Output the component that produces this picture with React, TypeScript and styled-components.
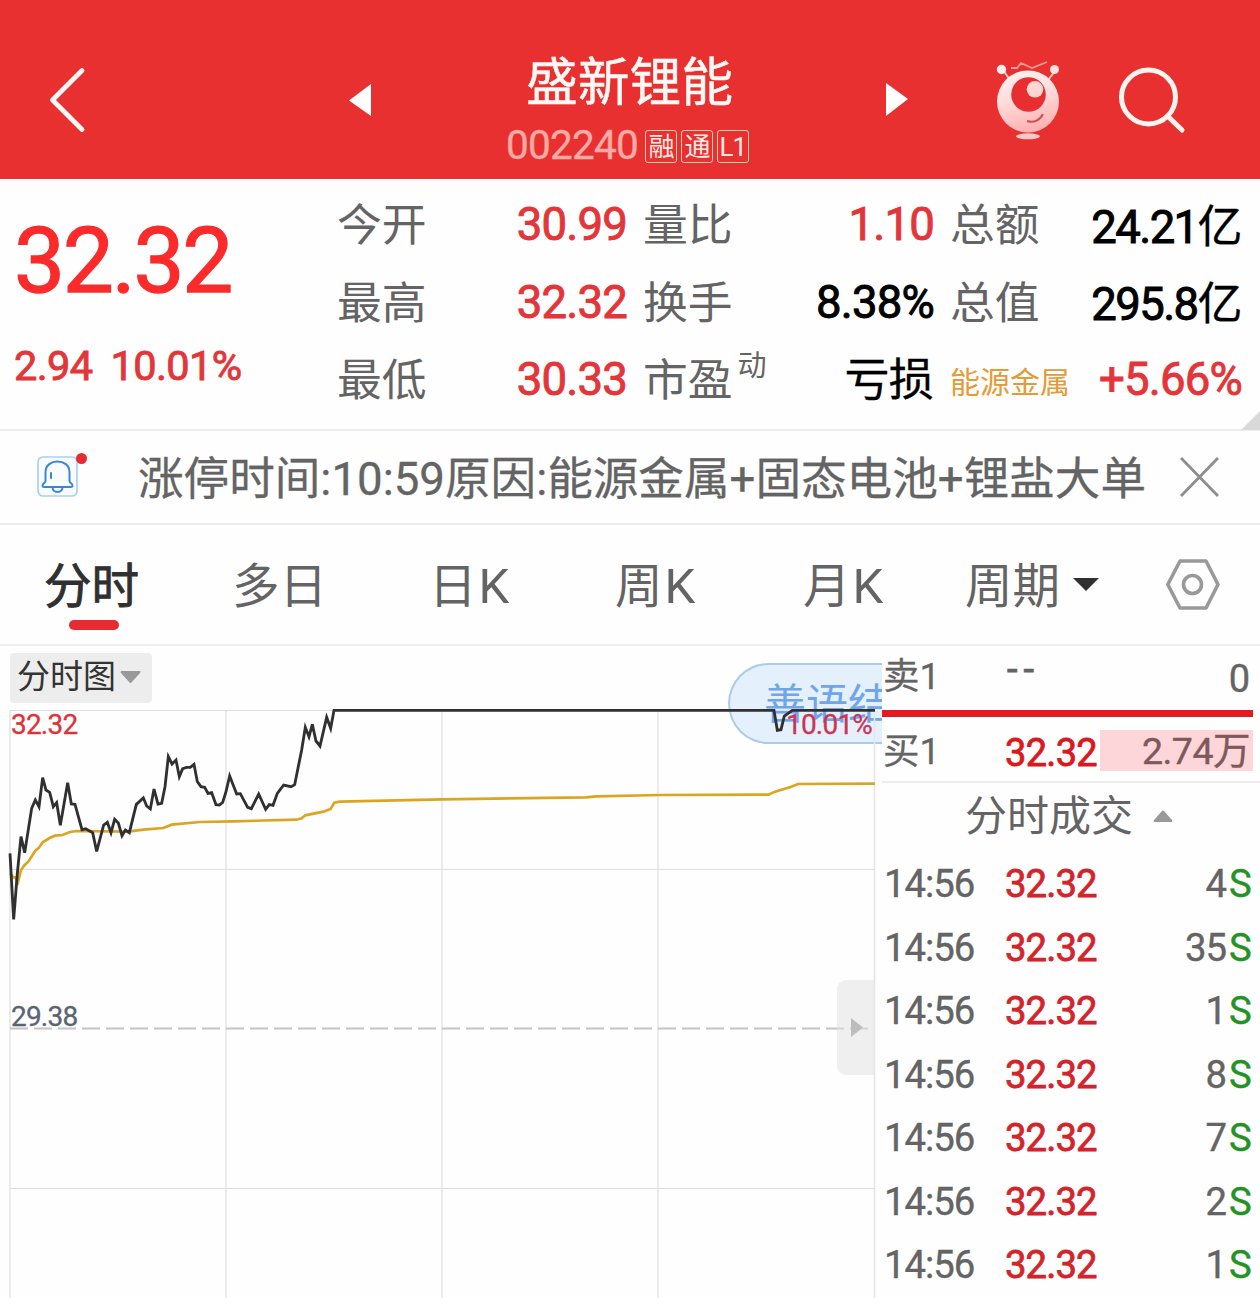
import React from "react";
import styled, { createGlobalStyle } from "styled-components";

const RED = "#e2363a";
const GREY = "#646464";

const GlobalStyle = createGlobalStyle`
  *, *::before, *::after { box-sizing: border-box; }
  body {
    margin: 0;
    background: #fefefe;
    color: ${GREY};
    font-family: Roboto, "Noto Sans CJK SC", sans-serif;
  }
  svg { display: block; }
`;

const Page = styled.div`
  width: 1260px;
  height: 1298px;
  overflow: hidden;
  background: #fefefe;
  white-space: nowrap;
`;

/* ---------- Header ---------- */

const Header = styled.header`
  display: flex;
  height: 179px;
  background: #e83030;
`;

const BackArea = styled.div`
  width: 349px;
  padding: 66px 0 0 48px;
`;

const ArrowSlot = styled.div`
  width: 22px;
  padding-top: 82px;
`;

const TitleBlock = styled.div`
  width: 515px;
  display: flex;
  flex-direction: column;
  align-items: center;
  padding-top: 50px;
`;

const Title = styled.h1`
  margin: 0 0 0 2px;
  height: 67px;
  font-size: 51.8px;
  line-height: 68px;
  font-weight: 400;
  color: #fff8f4;
  -webkit-text-stroke: 0.5px #fff8f4;
`;

const CodeRow = styled.div`
  display: flex;
  align-items: center;
  gap: 4px;
  height: 58px;
  margin-left: -2px;
`;

const Code = styled.span`
  margin-right: 3px;
  height: 60px;
  font-size: 40.5px;
  line-height: 58px;
  letter-spacing: -0.8px;
  color: #ffaaa4;
  -webkit-text-stroke: 0.4px #ffaaa4;
`;

const Badge = styled.span`
  display: flex;
  justify-content: center;
  width: 32px;
  height: 33px;
  border: 1px solid #ffc9b4;
  border-radius: 3px;
  font-size: 26px;
  line-height: 32px;
  letter-spacing: -1px;
  color: #ffe9e2;
`;

const HeaderIcons = styled.div`
  display: flex;
  gap: 54px;
  padding: 60px 0 0 88px;
`;

/* ---------- Quote summary ---------- */

const Quote = styled.section`
  position: relative;
  display: flex;
  height: 252px;
  border-bottom: 2px solid #ededed;
`;

const PriceBlock = styled.div`
  width: 337px;
  padding: 30px 0 0 13px;
`;

const Price = styled.div`
  height: 105px;
  padding-left: 1px;
  font-size: 91px;
  line-height: 105px;
  letter-spacing: -2.3px;
  color: #fb2b2b;
  -webkit-text-stroke: 1.3px #fb2b2b;
`;

const Change = styled.div`
  display: flex;
  gap: 18px;
  margin-top: 21px;
  padding-left: 1px;
  font-size: 41.5px;
  line-height: 61px;
  letter-spacing: -0.6px;
  color: ${RED};
  -webkit-text-stroke: 0.9px ${RED};
`;

const Stats = styled.div`
  display: grid;
  grid-template-columns: 290px 291px 292px;
  column-gap: 16px;
  grid-auto-rows: 77.5px;
  padding-top: 7px;
`;

const Stat = styled.div`
  display: flex;
  justify-content: space-between;
  line-height: 77px;
`;

const StatLabel = styled.span<{ $small?: boolean }>`
  font-size: ${(p) => (p.$small ? 30 : 44.8)}px;
  color: ${(p) => (p.$small ? "#e59a38" : GREY)};
  padding: ${(p) => (p.$small ? "3px 0 0 0" : "1px 0 0")};
`;

const Sup = styled.span`
  position: relative;
  top: -20px;
  margin-left: 5px;
  font-size: 29px;
`;

const StatValue = styled.span<{ $black?: boolean; $drop?: number; $tight?: boolean }>`
  font-size: 45.5px;
  letter-spacing: ${(p) => (p.$tight ? -1.6 : -0.8)}px;
  color: ${(p) => (p.$black ? "#000" : RED)};
  -webkit-text-stroke: 0.9px ${(p) => (p.$black ? "#000" : RED)};
  padding-top: ${(p) => p.$drop ?? 0}px;
`;

const Han = styled.span`
  margin-right: 1px;
  font-size: 45px;
  -webkit-text-stroke-width: 0.3px;
`;

const Corner = styled.svg`
  position: absolute;
  right: 0;
  bottom: -1px;
`;

/* ---------- News strip ---------- */

const News = styled.section`
  display: flex;
  align-items: center;
  height: 94px;
  border-bottom: 2px solid #ededed;
  padding-left: 36px;
`;

const NewsText = styled.p`
  width: 1042px;
  margin: 0 0 0 48px;
  padding-top: 5px;
  font-size: 45.6px;
  line-height: 87px;
  -webkit-text-stroke: 0.3px ${GREY};
`;

/* ---------- Tabs ---------- */

const Tabs = styled.nav`
  display: flex;
  height: 121px;
  border-bottom: 2px solid #efefef;
  padding-left: 44px;
`;

const Tab = styled.div<{ $width: number; $active?: boolean }>`
  width: ${(p) => p.$width}px;
  height: 119px;
  padding-top: 3px;
  font-size: 47.5px;
  line-height: 118px;
  color: ${(p) => (p.$active ? "#303030" : GREY)};
  -webkit-text-stroke: ${(p) => (p.$active ? "0.9px #303030" : "0")};
`;

const TabLabel = styled.span`
  display: block;
  height: 92px;
`;

const Latin = styled.span`
  margin-left: 2px;
  font-size: 49px;
`;

const Underline = styled.i`
  display: block;
  width: 50px;
  height: 10px;
  margin-left: 25px;
  border-radius: 5px;
  background: #e52c30;
`;

const CaretSlot = styled.div`
  width: 93px;
  padding-top: 53px;
`;

const GearSlot = styled.div`
  padding-top: 33px;
`;

/* ---------- Chart and order book ---------- */

const Body = styled.main`
  display: flex;
  height: 652px;
`;

const ChartPane = styled.section`
  position: relative;
  width: 882px;
  overflow: hidden;
`;

const ChartCanvas = styled.svg`
  position: relative;
`;

const ModeChip = styled.button`
  position: absolute;
  left: 10px;
  top: 7px;
  display: flex;
  align-items: center;
  gap: 4px;
  width: 142px;
  height: 50px;
  padding: 0 0 2px 7px;
  border: 0;
  border-radius: 4px;
  background: #ededed;
  font: 33px/48px Roboto, "Noto Sans CJK SC", sans-serif;
  color: #333;
`;

const Pill = styled.div`
  position: absolute;
  left: 728px;
  top: 17px;
  width: 260px;
  height: 81px;
  padding-left: 34px;
  border: 2px solid rgba(120, 165, 215, 0.5);
  border-radius: 41px;
  background: rgba(205, 227, 250, 0.55);
  font-size: 42px;
  line-height: 79px;
  color: #6fa5ea;
`;

const AxisLabel = styled.span<{ $x: number; $y: number; $color: string }>`
  position: absolute;
  left: ${(p) => p.$x}px;
  top: ${(p) => p.$y}px;
  font-size: 28px;
  line-height: 32px;
  letter-spacing: -0.8px;
  color: ${(p) => p.$color};
  -webkit-text-stroke: 0.3px ${(p) => p.$color};
`;

const Handle = styled.div`
  position: absolute;
  left: 837px;
  top: 334px;
  width: 37px;
  height: 95px;
  padding: 38px 0 0 14px;
  border-radius: 9px 0 0 9px;
  background: rgba(225, 225, 225, 0.55);
`;

const Book = styled.section`
  width: 378px;
`;

const BookRow = styled.div<{ $height: number }>`
  display: grid;
  grid-template-columns: 122px 95px 153px;
  height: ${(p) => p.$height}px;
  padding-left: 1px;
  font-size: 37.5px;
`;

const BookSide = styled.span<{ $line: number }>`
  line-height: ${(p) => p.$line}px;
  font-size: 36.5px;
  -webkit-text-stroke: 0.3px ${GREY};
`;

const BookPrice = styled.span<{ $line: number; $muted?: boolean }>`
  line-height: ${(p) => p.$line}px;
  font-size: 38px;
  padding-left: ${(p) => (p.$muted ? 2 : 0)}px;
  letter-spacing: ${(p) => (p.$muted ? 6 : -0.7)}px;
  color: ${(p) => (p.$muted ? GREY : "#d8191e")};
  -webkit-text-stroke: 0.8px ${(p) => (p.$muted ? GREY : "#d8191e")};
`;

const BookVolume = styled.span<{ $line: number }>`
  line-height: ${(p) => p.$line}px;
  font-size: 38px;
  padding-right: 3px;
  text-align: right;
  -webkit-text-stroke: 0.4px ${GREY};
`;

const Highlight = styled.span`
  height: 41px;
  padding-right: 3px;
  margin-top: 13px;
  background: #fcd6d9;
  color: #80585b;
  line-height: 42px;
  letter-spacing: -0.5px;
  text-align: right;
  -webkit-text-stroke: 0.4px #80585b;
`;

const RedBar = styled.div`
  width: 371px;
  height: 7px;
  background: #e11b1f;
`;

const TradesTitle = styled.div`
  display: flex;
  align-items: center;
  justify-content: center;
  gap: 20px;
  height: 71px;
  border-top: 2px solid #ededed;
  padding: 0 4px 2px 0;
  font-size: 42px;
  line-height: 69px;
`;

const TradeRow = styled.div`
  display: grid;
  grid-template-columns: 120px 120px 102px 28px;
  height: 63.5px;
  padding-left: 2px;
  font-size: 38.3px;
  line-height: 63px;
  letter-spacing: -1px;
  -webkit-text-stroke: 0.4px ${GREY};
`;

const TradePrice = styled.span`
  color: #d2252b;
  padding-left: 1px;
  letter-spacing: -0.9px;
  -webkit-text-stroke: 0.8px #d2252b;
`;

const TradeVolume = styled.span`
  text-align: right;
`;

const TradeSide = styled.span`
  padding-left: 3px;
  color: #239326;
  -webkit-text-stroke: 0.4px #239326;
`;

const trades = ["4", "35", "1", "8", "7", "2", "1"];

const pricePoints =
  "30,640 41,838 52,700 63,590 74,638 95,505 106,480 117,500 128,413 138,450 149,457 160,500 170,488 181,556 203,428 214,492 225,493 246,569 257,566 278,578 290,634 311,555 322,547 333,578 344,538 355,549 366,587 376,570 388,578 409,493 430,474 440,498 451,507 462,447 474,492 485,490 495,440 505,350 516,372 528,360 538,410 548,386 560,382 571,382 582,373 592,425 603,440 614,442 624,460 635,458 648,494 658,495 668,487 678,455 689,408 710,462 721,461 743,502 754,506 776,462 797,508 808,494 819,496 832,460 851,435 873,440 884,434 905,330 916,262 927,290 937,253 948,303 960,318 980,232 992,265 1002,211 2322,211 2332,271 2343,269 2353,228 2377,211 2625,211";

const averagePoints =
  "30,700 40,712 48,712 52,735 63,690 74,675 85,665 106,632 117,623 128,607 149,594 165,587 187,585 210,576 230,573 385,575 430,569 490,564 515,554 600,546 700,544 890,539 905,535 916,526 970,515 992,507 1003,488 1020,485 1326,478 1758,472 1790,469 1980,465 2306,464 2325,455 2372,441 2394,432 2625,431";

const Chart = () => (
  <ChartCanvas width="882" height="652" fill="none">
    <g stroke="#e6e6e6" strokeWidth="1.6">
      <path d="M10 64V652M226 64V652M442 64V652M658 64V652M874.5 64V652" />
      <path d="M10 64.5H875M10 223.5H875M10 542.5H875" stroke="#dedede" strokeWidth="1.2" />
    </g>
    <path d="M10 382.5H874" stroke="#c4c4c4" strokeWidth="1.8" strokeDasharray="18 6" />
    <g transform="translate(0 -6) scale(0.33333)">
      <polyline points={averagePoints} stroke="#dba51f" strokeWidth="8" />
      <polyline points={pricePoints} stroke="#303030" strokeWidth="8.500" />
    </g>
  </ChartCanvas>
);

const Mascot = () => (
  <svg width="68" height="82" viewBox="0 0 68 82" fill="none">
    <defs>
      <linearGradient id="face" x1="0" y1="0" x2="0.25" y2="1">
        <stop offset="0" stopColor="#fff4f2" />
        <stop offset="0.5" stopColor="#ffdcdc" />
        <stop offset="1" stopColor="#ffb4b4" />
      </linearGradient>
    </defs>
    <path d="M7 10L14 20M60 10L52 20" stroke="#ffc9c5" strokeWidth="2" />
    <circle cx="5.5" cy="9.5" r="4.7" fill="#fff0ee" />
    <circle cx="58.5" cy="9.5" r="4.5" fill="#ffe0dc" />
    <path d="M15 8H21L25 3L36 8L51 2" stroke="#ff9d94" strokeWidth="1.8" />
    <circle cx="32" cy="41.5" r="31" fill="url(#face)" />
    <circle cx="32.500" cy="34.500" r="17.3" fill="#e72f32" />
    <circle cx="39" cy="29.3" r="8.3" fill="#ffd6d1" />
    <path d="M31 61C38 63.500 44 60 47 54" stroke="#cf5057" strokeWidth="2" />
    <ellipse cx="32" cy="76.300" rx="12" ry="3" fill="#ffc7c7" />
  </svg>
);

const Bell = () => (
  <svg width="54" height="54" viewBox="0 0 54 54" fill="none">
    <rect x="2" y="7" width="39" height="39" rx="5" fill="#f8fcff" stroke="#a9cff3" strokeWidth="1.7" />
    <g stroke="#3a86d5" strokeWidth="2" strokeLinecap="round" strokeLinejoin="round">
      <path d="M9.500 31V22C9.500 8 33.500 8 33.500 22V31C33.500 33 36.500 33.500 36.500 35.500Q36.500 37 34.500 37H8.500Q6.500 37 6.500 35.500C6.500 33.500 9.500 33 9.500 31Z" />
      <path d="M16.500 37.500C17 43.500 26 43.500 26.500 37.500M15 23V28" />
    </g>
    <circle cx="45.500" cy="8.500" r="5.500" fill="#e32d33" />
  </svg>
);

export default function App() {
  return (
    <>
      <GlobalStyle />
      <Page>
        <Header>
          <BackArea>
            <svg width="40" height="68" fill="none">
              <path d="M34 4.500L4.500 34L34 63.500" stroke="#fff8f4" strokeWidth="4.800" strokeLinecap="round" strokeLinejoin="round" />
            </svg>
          </BackArea>
          <ArrowSlot>
            <svg width="22" height="35"><path d="M0 18.500L22 2V34Z" fill="#fff" /></svg>
          </ArrowSlot>
          <TitleBlock>
            <Title>盛新锂能</Title>
            <CodeRow>
              <Code>002240</Code>
              <Badge>融</Badge>
              <Badge>通</Badge>
              <Badge>L1</Badge>
            </CodeRow>
          </TitleBlock>
          <ArrowSlot>
            <svg width="22" height="35"><path d="M22 17L0 1V34Z" fill="#fff" /></svg>
          </ArrowSlot>
          <HeaderIcons>
            <Mascot />
            <svg width="70" height="76" fill="none" stroke="#fff4ee" strokeWidth="5" strokeLinecap="round">
              <circle cx="30.500" cy="37" r="27" />
              <path d="M50.500 57L64 70" />
            </svg>
          </HeaderIcons>
        </Header>

        <Quote>
          <PriceBlock>
            <Price>32.32</Price>
            <Change>
              <span>2.94</span>
              <span>10.01%</span>
            </Change>
          </PriceBlock>
          <Stats>
            <Stat><StatLabel>今开</StatLabel><StatValue>30.99</StatValue></Stat>
            <Stat><StatLabel>量比</StatLabel><StatValue>1.10</StatValue></Stat>
            <Stat><StatLabel>总额</StatLabel><StatValue $black $tight $drop={3}>24.21<Han>亿</Han></StatValue></Stat>
            <Stat><StatLabel>最高</StatLabel><StatValue>32.32</StatValue></Stat>
            <Stat><StatLabel>换手</StatLabel><StatValue $black>8.38%</StatValue></Stat>
            <Stat><StatLabel>总值</StatLabel><StatValue $black $tight $drop={2}>295.8<Han>亿</Han></StatValue></Stat>
            <Stat><StatLabel>最低</StatLabel><StatValue>30.33</StatValue></Stat>
            <Stat><StatLabel>市盈<Sup>动</Sup></StatLabel><StatValue $black $drop={1}><Han>亏损</Han></StatValue></Stat>
            <Stat><StatLabel $small>能源金属</StatLabel><StatValue>+5.66%</StatValue></Stat>
          </Stats>
          <Corner width="19" height="19"><path d="M19 0V19H0Z" fill="#d9d9d9" /></Corner>
        </Quote>

        <News>
          <Bell />
          <NewsText>涨停时间:10:59原因:能源金属+固态电池+锂盐大单</NewsText>
          <svg width="40" height="40" stroke="#8e8e8e" strokeWidth="2.800"><path d="M1 1L38 39M38 1L1 39" /></svg>
        </News>

        <Tabs>
          <Tab $width={188} $active>
            <TabLabel>分时</TabLabel>
            <Underline />
          </Tab>
          <Tab $width={197}>多日</Tab>
          <Tab $width={186}>日<Latin>K</Latin></Tab>
          <Tab $width={188}>周<Latin>K</Latin></Tab>
          <Tab $width={162}>月<Latin>K</Latin></Tab>
          <Tab $width={108}>周期</Tab>
          <CaretSlot>
            <svg width="26" height="14"><path d="M0 0H26L13 13Z" fill="#303030" /></svg>
          </CaretSlot>
          <GearSlot>
            <svg width="54" height="52" fill="none" stroke="#999" strokeWidth="3.600" strokeLinejoin="round">
              <path d="M14 3H40L52 26.500L40 50H14L1.800 26.500Z" />
              <circle cx="26.500" cy="26.500" r="9" />
            </svg>
          </GearSlot>
        </Tabs>

        <Body>
          <ChartPane>
            <Pill>善语结</Pill>
            <Chart />
            <ModeChip>
              分时图
              <svg width="21" height="13"><path d="M1 0H20Q21 1 20 2L11 12H10L1 2Q0 1 1 0Z" fill="#999" /></svg>
            </ModeChip>
            <AxisLabel $x={11} $y={63} $color="#dc333b">32.32</AxisLabel>
            <AxisLabel $x={786} $y={63} $color="#cd3453">10.01%</AxisLabel>
            <AxisLabel $x={11} $y={355} $color="#586474">29.38</AxisLabel>
            <Handle>
              <svg width="12" height="19"><path d="M0 0L12 9.500L0 19Z" fill="#bdbdbd" /></svg>
            </Handle>
          </ChartPane>

          <Book>
            <BookRow $height={64}>
              <BookSide $line={62}>卖1</BookSide>
              <BookPrice $line={46} $muted>--</BookPrice>
              <BookVolume $line={66}>0</BookVolume>
            </BookRow>
            <RedBar />
            <BookRow $height={64}>
              <BookSide $line={69}>买1</BookSide>
              <BookPrice $line={73}>32.32</BookPrice>
              <Highlight>2.74万</Highlight>
            </BookRow>
            <TradesTitle>
              分时成交
              <svg width="20" height="13"><path d="M1 12Q0 11 1 10L9 1Q10 0 11 1L19 10Q20 12 18 12Z" fill="#999" /></svg>
            </TradesTitle>
            {trades.map((volume, i) => (
              <TradeRow key={i}>
                <span>14:56</span>
                <TradePrice>32.32</TradePrice>
                <TradeVolume>{volume}</TradeVolume>
                <TradeSide>S</TradeSide>
              </TradeRow>
            ))}
          </Book>
        </Body>
      </Page>
    </>
  );
}
